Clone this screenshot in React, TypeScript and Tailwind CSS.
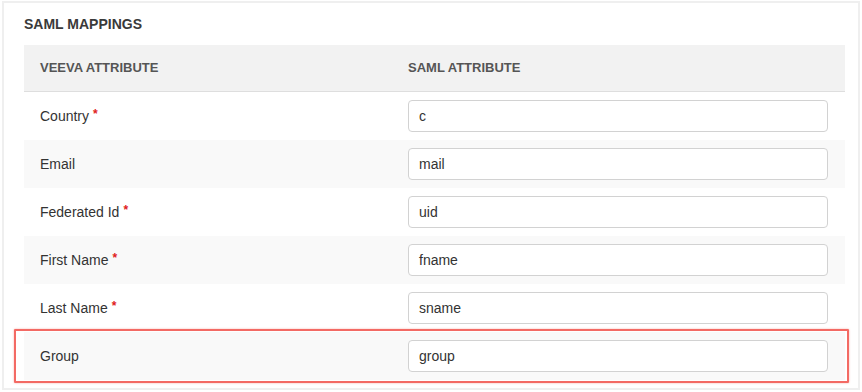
import React from "react";

const rows = [
  { label: "Country", req: true, value: "c" },
  { label: "Email", req: false, value: "mail" },
  { label: "Federated Id", req: true, value: "uid" },
  { label: "First Name", req: true, value: "fname" },
  { label: "Last Name", req: true, value: "sname" },
  { label: "Group", req: false, value: "group" },
];

export default function App() {
  return (
    <div className="w-[862px] h-[392px] bg-white pt-[1px] pl-[2px]" style={{ fontFamily: '"Liberation Sans", Arial, sans-serif' }}>
      <div className="w-[858px] h-[389px] border-2 border-[#efefef] pl-[20px] pr-[13px]">
        <div className="h-[42px] flex items-center pt-[1px] text-[14px] font-bold text-[#3a3a3a]">SAML MAPPINGS</div>
        <div className="w-[821px]">
          <div className="flex h-[46px] items-center bg-[#f2f2f2] border-b border-[#dedede] text-[13px] font-bold text-[#555] box-content">
            <div className="w-[368px] pl-[16px]">VEEVA ATTRIBUTE</div>
            <div className="flex-1 pl-[16px]">SAML ATTRIBUTE</div>
          </div>
          {rows.map((r, i) => (
            <div key={r.label} className={`relative flex h-[48px] items-center text-[14px] text-[#333] ${i % 2 === 1 ? "bg-[#f9f9f9]" : "bg-white"}`}>
              <div className="w-[368px] pl-[16px] flex items-center">
                <span>{r.label}</span>
                {r.req && <span className="ml-[4px] text-[#e02020] text-[12px] -mt-[4px] font-bold">*</span>}
              </div>
              <div className="flex-1 pl-[16px] pr-[17px]">
                <div className="h-[32px] rounded-[4px] border border-[#d2d2d2] bg-white flex items-center pl-[10px] text-[14px] text-[#333]">
                  {r.value}
                </div>
              </div>
              {r.label === "Group" && (
                <div className="absolute left-[-10px] right-[-4px] top-[-3px] bottom-[-3px] border-2 border-[#f36a64] rounded-[1px] shadow-[0_0_2px_rgba(243,106,100,0.6)] pointer-events-none" />
              )}
            </div>
          ))}
        </div>
      </div>
    </div>
  );
}
